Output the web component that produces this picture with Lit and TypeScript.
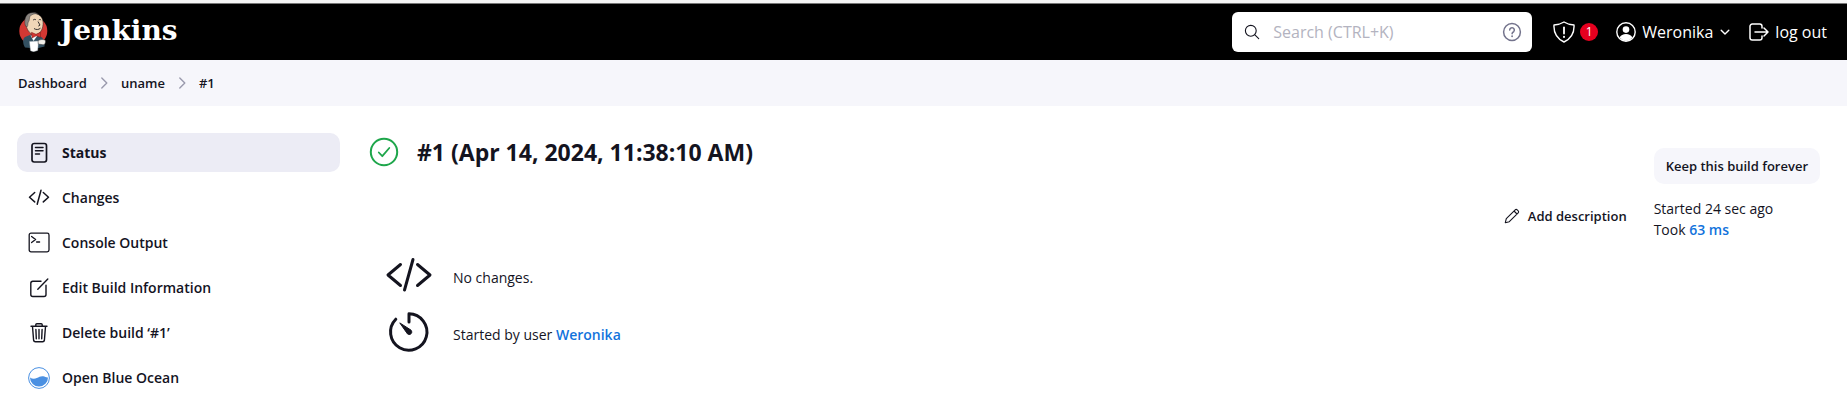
import { LitElement, html, css, svg, TemplateResult } from "lit";
import { customElement, property } from "lit/decorators.js";
import { classMap } from "lit/directives/class-map.js";

const line = (size: number, body: TemplateResult, width = 1.5, box = 22) => html`<svg
  width=${size} height=${size} viewBox="0 0 ${box} ${box}" fill="none" stroke="currentColor"
  stroke-width=${width} stroke-linecap="round" stroke-linejoin="round" aria-hidden="true">${body}</svg>`;

const icons = {
  status: line(22, svg`<rect x="4" y="1.5" width="14.5" height="18.5" rx="2.2" stroke-width="1.7"/><path d="M7.5 5.5h7.5M7.5 8.7h7.5M7.5 12h4"/>`),
  changes: line(22, svg`<path d="M6.7 5.5L1.5 10.2l5.2 4.7M15.3 5.5l5.2 4.7-5.2 4.7M13 3.2L9.2 17.3"/>`),
  console: line(22, svg`<rect x="1.2" y="1.2" width="19.8" height="18.6" rx="1.8"/><path d="M3.6 4.4l4 3.2-4 3M8.6 10h3"/>`, 1.3),
  edit: line(22, svg`<path d="M13 4.3H4.8a2 2 0 00-2 2v11.2a2 2 0 002 2H16a2 2 0 002-2V8.3M9.8 12.2L19.8 2"/>`, 1.4),
  trash: line(22, svg`<path d="M4.5 4.5l1.1 13.7a1.8 1.8 0 001.8 1.6h7.2a1.8 1.8 0 001.8-1.6l1.1-13.7M3 4.3h16M7.8 4V2.7a1 1 0 011-1h4.4a1 1 0 011 1V4M11 7.5v9.3M7.9 7.5l.4 9.3M14.1 7.5l-.4 9.3"/>`, 1.4),
  ocean: html`<svg width="22" height="22" viewBox="0 0 22 22" aria-hidden="true"><circle cx="11" cy="11" r="10.4" fill="#fff" stroke="#4a90e2" stroke-width="1"/><path d="M2 10.600C4 12 6.500 12.300 8.800 11.100C11 9.900 12.800 9 15.200 9.300C17 9.600 18.200 10.600 20 10.400A9 9 0 0 1 2 10.600z" fill="#4a90e2"/></svg>`,
  search: line(16, svg`<circle cx="6.8" cy="6.8" r="5.4"/><path d="M10.900 10.900l3.800 3.800"/>`, 1.1, 16),
  help: line(20, svg`<circle cx="10" cy="10" r="8.4"/><path d="M7.700 8a2.300 2.300 0 114 1.600c-.8.8-1.600 1.100-1.600 2.200"/><path d="M10.100 14.200v.1" stroke-width="1.8"/>`, 1.5, 20),
  shield: line(22, svg`<path d="M11 1c2.700 1.700 6.200 2.700 10 3 .5 8-3.300 13.700-10 17C4.300 17.700.5 12 1 4c3.800-.3 7.300-1.300 10-3z"/><path d="M11 6.300v6.200" stroke-width="1.8"/><path d="M11 15.800v.1" stroke-width="2"/>`, 1.4),
  user: html`<svg width="20" height="20" viewBox="0 0 20 20" aria-hidden="true"><circle cx="10" cy="10" r="9.2" fill="none" stroke="currentColor" stroke-width="1.4"/><circle cx="10" cy="7.6" r="3.3" fill="currentColor"/><path d="M3.600 15.600c1-2.300 3.500-3.600 6.400-3.600s5.400 1.300 6.400 3.600A9 9 0 0110 19a9 9 0 01-6.400-3.400z" fill="currentColor"/></svg>`,
  down: line(10, svg`<path d="M1.200 3.200L5 7l3.800-3.800"/>`, 1.4, 10),
  logout: line(20, svg`<path d="M13 6V4.300A2.300 2.300 0 0010.700 2H3.300A2.300 2.300 0 001 4.300v11.400A2.300 2.300 0 003.300 18h7.400a2.300 2.300 0 002.300-2.300V14M6 10h13M15 6l4 4-4 4"/>`, 1.5, 20),
  crumb: line(14, svg`<path d="M4.800 2l5 5-5 5"/>`, 1.4, 14),
  success: line(30, svg`<circle cx="15" cy="15" r="13.2" stroke-width="2"/><path d="M9.800 15.500l3.500 3.700 7-8.200"/>`, 1.8, 30),
  pencil: line(16, svg`<path d="M1.300 14.700l1-4L11.200 1.800a1.400 1.400 0 012 0l1 1a1.400 1.400 0 010 2L5.300 13.700l-4 1zM10 3l3 3"/>`, 1.1, 16),
  code: line(48, svg`<path d="M15.500 13.500L3 24l12.500 10.500M32.500 13.500L45 24 32.500 34.500M28 8.500L19.500 39"/>`, 3, 48),
  timer: line(48, svg`<path d="M10.800 11.200A18.200 18.200 0 1024 5.800V14"/><path d="M15 15.200l6.800 9.700a2.600 2.600 0 103.400-3.400z" fill="currentColor" stroke-width="1"/>`, 3, 48),
};

const butler = html`<svg width="30" height="40" viewBox="0 0 30 40" aria-hidden="true">
  <circle cx="15.3" cy="19" r="14" fill="#d33833"/>
  <path d="M7 35.500C4.500 31.500 4.500 26.500 7 25l6-2.500 9 1.800c3.500 1.300 5 6 4.500 10.200l-8 2z" fill="#335061"/>
  <path d="M12.500 23.500l3 5.500 4-5.500z" fill="#fff"/>
  <path d="M8.500 6C10 1.500 14.500.3 19 2c4.500 1.700 6.500 5.500 6 10.500-.3 5-3 9.700-7.500 10.200-4 .3-7-2.700-8.500-6.500C7 13 7.500 9 8.500 6z" fill="#f0d6b7" stroke="#231f20" stroke-width=".5"/>
  <path d="M7.300 13.500C5.800 8 7.500 2.500 12 1c3-1 6-.6 8 .8-3-.4-6.500.2-8 2.700-1 2-.2 4-1.700 5.500-.8 1.500.2 3-1.300 5z" fill="#8b8680" stroke="#231f20" stroke-width=".4"/>
  <path d="M15 8.300c.9-1.200 2.200-1.200 3-.3M20.800 8c.8-.8 1.700-.6 2.300.2M20 9.500l2 3.600-1.700 1M16 16.500c2 1.500 4.700 1.300 6.500-.3" fill="none" stroke="#231f20" stroke-width=".9"/>
  <path d="M13.500 20.300l4.500 2 4.500-2v5l-4.300-1.500-4.200 2.200z" fill="#d33833" stroke="#7d1a16" stroke-width=".5"/>
  <path d="M11.500 29.500l9-.5-.8 9.500-4.200 1.300-3-1z" fill="#fff" stroke="#9aa5ab" stroke-width=".4"/>
  <path d="M20 29c2-2 6-1.700 7.300-.7.700 2-.3 4.300-2 4.500l-5-.8z" fill="#f2efe9" stroke="#231f20" stroke-width=".4"/>
</svg>`;

const shared = css`
  * { box-sizing: border-box; }
  svg { display: block; flex: none; }
  a { color: inherit; text-decoration: none; }
  button, input { font: inherit; color: inherit; border: 0; background: none; padding: 0; margin: 0; }
`;

@customElement("page-header")
class PageHeader extends LitElement {
  static styles = [shared, css`
    :host { display: block; border-top: 3px solid #f5f5f5; background: #000; color: #fff; }
    .bar { display: flex; align-items: center; height: 57px; padding: 0 20px 0 18px; border-top: 1px solid #777; font-size: 16px; font-weight: 500; }
    .brand { display: flex; align-items: center; gap: 12px; margin-right: auto; }
    .word { font: 700 28px/40px "DejaVu Serif", serif; padding-bottom: 2px; }
    .search { display: flex; align-items: center; width: 300px; height: 40px; padding: 0 10px 0 12px; border-radius: 6px; background: #fff; color: #14141f; font-weight: 400; }
    .search input { flex: 1; min-width: 0; padding: 0 13px; outline: none; }
    .search input::placeholder { color: #b3b3c0; opacity: 1; }
    .help { color: #73738c; }
    .alerts { display: flex; align-items: center; gap: 5px; margin: 0 18px 0 21px; }
    .count { display: grid; place-items: center; width: 18px; height: 18px; border-radius: 50%; background: #e6001f; font-size: 12px; line-height: 18px; }
    .user { display: flex; align-items: center; gap: 6px; margin-right: 19px; }
    .menu { display: flex; padding: 4px 0 4px 1px; }
    .out { display: flex; align-items: center; gap: 6px; }
  `];
  render() {
    return html`<header class="bar">
      <a class="brand" href="#">${butler}<span class="word">Jenkins</span></a>
      <label class="search">${icons.search}
        <input type="search" placeholder="Search (CTRL+K)" aria-label="Search">
        <button class="help" type="button" aria-label="Help">${icons.help}</button>
      </label>
      <a class="alerts" href="#" aria-label="Security warnings">${icons.shield}<span class="count">1</span></a>
      <div class="user"><a class="user-link" href="#" aria-label="Profile">${icons.user}</a><a href="#">Weronika</a>
        <button class="menu" type="button" aria-label="User menu">${icons.down}</button></div>
      <a class="out" href="#">${icons.logout}<span>log out</span></a>
    </header>`;
  }
}

@customElement("bread-crumbs")
class BreadCrumbs extends LitElement {
  @property({ attribute: false }) items: string[] = [];
  static styles = [shared, css`
    :host { display: block; background: #f6f6fb; }
    ol { display: flex; align-items: center; height: 46px; margin: 0; padding: 0 18px; list-style: none; font-size: 13px; font-weight: 600; color: #14141f; }
    li { display: flex; align-items: center; }
    .sep { color: #9a9aad; margin: 0 10px; }
  `];
  render() {
    return html`<nav aria-label="Breadcrumb"><ol>${this.items.map((t, i) => html`<li>
      ${i ? html`<span class="sep">${icons.crumb}</span>` : ""}<a href="#">${t}</a></li>`)}</ol></nav>`;
  }
}

@customElement("side-tasks")
class SideTasks extends LitElement {
  static styles = [shared, css`
    nav { display: flex; flex-direction: column; gap: 6px; font-size: 14px; font-weight: 600; }
    .task { display: flex; align-items: center; gap: 12px; height: 39px; padding: 0 11px; border-radius: 10px; }
    .active { background: #ececf5; font-weight: 700; }
  `];
  tasks: [keyof typeof icons, string][] = [
    ["status", "Status"], ["changes", "Changes"], ["console", "Console Output"],
    ["edit", "Edit Build Information"], ["trash", "Delete build ‘#1’"], ["ocean", "Open Blue Ocean"],
  ];
  render() {
    return html`<nav aria-label="Build">${this.tasks.map(([icon, label], i) => html`
      <a href="#" class=${classMap({ task: true, active: i === 0 })}>${icons[icon]}<span>${label}</span></a>`)}</nav>`;
  }
}

@customElement("app-root")
class AppRoot extends LitElement {
  static styles = [shared, css`
    :host { display: block; min-height: 100vh; background: #fff; color: #14141f; font: 400 14px/21px "Open Sans", "Noto Sans", sans-serif; }
    .page { display: flex; gap: 29px; padding: 27px 27px 0 17px; }
    side-tasks { flex: 0 0 323px; }
    main { display: flex; flex: 1; min-width: 0; }
    .build { flex: 1; min-width: 0; }
    .title { display: flex; align-items: center; gap: 18px; height: 37px; }
    .ok { color: #1ea64b; }
    h1 { margin: 0; font-size: 23px; line-height: 32px; font-weight: 700; }
    .facts { display: grid; gap: 9px; margin: 81px 0 0 16px; }
    .fact { display: flex; align-items: center; gap: 20px; }
    .fact p { margin: 5px 0 0; }
    .link { color: #1273dc; font-weight: 600; }
    .side { display: flex; align-items: flex-start; gap: 27px; padding-top: 15px; }
    .describe { display: flex; align-items: center; gap: 8px; margin-top: 58px; font-size: 13px; line-height: 20px; font-weight: 600; }
    .keep { height: 36px; padding: 0 12px; border-radius: 10px; background: #f6f6fb; font-size: 13px; font-weight: 600; }
    .times { margin: 14px 0 0; }
  `];
  render() {
    return html`
      <page-header></page-header>
      <bread-crumbs .items=${["Dashboard", "uname", "#1"]}></bread-crumbs>
      <div class="page">
        <side-tasks></side-tasks>
        <main>
          <section class="build">
            <div class="title"><span class="ok">${icons.success}</span><h1>#1 (Apr 14, 2024, 11:38:10 AM)</h1></div>
            <div class="facts">
              <div class="fact">${icons.code}<p>No changes.</p></div>
              <div class="fact">${icons.timer}<p>Started by user <a class="link" href="#">Weronika</a></p></div>
            </div>
          </section>
          <aside class="side">
            <a class="describe" href="#">${icons.pencil}<span>Add description</span></a>
            <div>
              <button class="keep" type="button">Keep this build forever</button>
              <p class="times">Started 24 sec ago<br>Took <a class="link" href="#">63 ms</a></p>
            </div>
          </aside>
        </main>
      </div>`;
  }
}
